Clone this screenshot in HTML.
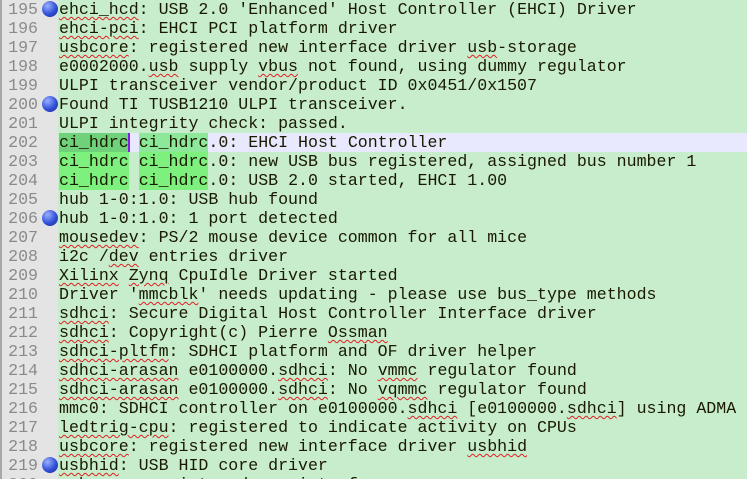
<!DOCTYPE html>
<html><head><meta charset="utf-8"><style>
html,body{margin:0;padding:0;width:747px;height:479px;overflow:hidden;background:#c7edcc;}
#w{position:relative;width:747px;height:479px;overflow:hidden;}
#g{position:absolute;left:0;top:0;width:58px;height:479px;background:#e4e4e4;border-left:2px solid #a8a8a8;box-sizing:border-box;}
.r{position:absolute;left:0;width:747px;height:19px;}
.n{position:absolute;left:0;width:38px;text-align:right;font:16.6px/19px "Liberation Mono",monospace;color:#8a8a8a;}
.t{position:absolute;left:59px;white-space:pre;font:16.6px/19px "Liberation Mono",monospace;color:#1a1a00;}
.b{position:absolute;left:42px;top:1px;width:16px;height:16px;border-radius:50%;background:radial-gradient(circle at 35% 30%,#9ab0ff,#3050d8 55%,#1a2a90);}
u{text-decoration:underline wavy #e02020;text-decoration-thickness:1px;text-underline-offset:2px;}
.h1{background:#6fd17a}.h2{background:#8ee89a}.h3{background:#7ef07e}
</style></head><body><div id="w">
<div id="g"></div>
<div class="r" style="top:133px;left:129px;width:618px;background:#e8e8ff"></div>
<div class="r" style="top:0"><span class="n">195</span><span class="b"></span><span class="t"><u>ehci_hcd</u>: USB 2.0 'Enhanced' Host Controller (EHCI) Driver</span></div>
<div class="r" style="top:19px"><span class="n">196</span><span class="t"><u>ehci-pci</u>: EHCI PCI platform driver</span></div>
<div class="r" style="top:38px"><span class="n">197</span><span class="t"><u>usbcore</u>: registered new interface driver <u>usb</u>-storage</span></div>
<div class="r" style="top:57px"><span class="n">198</span><span class="t">e0002000.<u>usb</u> supply <u>vbus</u> not found, using dummy regulator</span></div>
<div class="r" style="top:76px"><span class="n">199</span><span class="t">ULPI transceiver vendor/product ID 0x0451/0x1507</span></div>
<div class="r" style="top:95px"><span class="n">200</span><span class="b"></span><span class="t">Found TI TUSB1210 ULPI transceiver.</span></div>
<div class="r" style="top:114px"><span class="n">201</span><span class="t">ULPI integrity check: passed.</span></div>
<div class="r" style="top:133px"><span class="n">202</span><span class="t"><span class="h1">ci_hdrc</span> <span class="h2">ci_hdrc</span>.0: EHCI Host Controller</span><span style="position:absolute;left:128px;top:0;width:2px;height:19px;background:#8020e0"></span></div>
<div class="r" style="top:152px"><span class="n">203</span><span class="t"><span class="h3">ci_hdrc</span> <span class="h3">ci_hdrc</span>.0: new USB bus registered, assigned bus number 1</span></div>
<div class="r" style="top:171px"><span class="n">204</span><span class="t"><span class="h3">ci_hdrc</span> <span class="h3">ci_hdrc</span>.0: USB 2.0 started, EHCI 1.00</span></div>
<div class="r" style="top:190px"><span class="n">205</span><span class="t">hub 1-0:1.0: USB hub found</span></div>
<div class="r" style="top:209px"><span class="n">206</span><span class="b"></span><span class="t">hub 1-0:1.0: 1 port detected</span></div>
<div class="r" style="top:228px"><span class="n">207</span><span class="t"><u>mousedev</u>: PS/2 mouse device common for all mice</span></div>
<div class="r" style="top:247px"><span class="n">208</span><span class="t">i2c /<u>dev</u> entries driver</span></div>
<div class="r" style="top:266px"><span class="n">209</span><span class="t"><u>Xilinx</u> <u>Zynq</u> CpuIdle Driver started</span></div>
<div class="r" style="top:285px"><span class="n">210</span><span class="t">Driver '<u>mmcblk</u>' needs updating - please use bus_type methods</span></div>
<div class="r" style="top:304px"><span class="n">211</span><span class="t"><u>sdhci</u>: Secure Digital Host Controller Interface driver</span></div>
<div class="r" style="top:323px"><span class="n">212</span><span class="t"><u>sdhci</u>: Copyright(c) Pierre <u>Ossman</u></span></div>
<div class="r" style="top:342px"><span class="n">213</span><span class="t"><u>sdhci-pltfm</u>: SDHCI platform and OF driver helper</span></div>
<div class="r" style="top:361px"><span class="n">214</span><span class="t"><u>sdhci-arasan</u> e0100000.<u>sdhci</u>: No <u>vmmc</u> regulator found</span></div>
<div class="r" style="top:380px"><span class="n">215</span><span class="t"><u>sdhci-arasan</u> e0100000.<u>sdhci</u>: No <u>vqmmc</u> regulator found</span></div>
<div class="r" style="top:399px"><span class="n">216</span><span class="t">mmc0: SDHCI controller on e0100000.<u>sdhci</u> [e0100000.<u>sdhci</u>] using ADMA</span></div>
<div class="r" style="top:418px"><span class="n">217</span><span class="t"><u>ledtrig-cpu</u>: registered to indicate activity on CPUs</span></div>
<div class="r" style="top:437px"><span class="n">218</span><span class="t"><u>usbcore</u>: registered new interface driver <u>usbhid</u></span></div>
<div class="r" style="top:456px"><span class="n">219</span><span class="b"></span><span class="t"><u>usbhid</u>: USB HID core driver</span></div>
<div class="r" style="top:475px"><span class="n">220</span><span class="t"><u>usbcore</u>: registered new interface</span></div>
</div></body></html>
